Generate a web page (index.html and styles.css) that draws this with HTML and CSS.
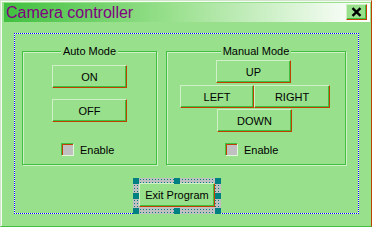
FILE: index.html
```html
<!DOCTYPE html>
<html lang="en">
<head>
  <meta charset="UTF-8" />
  <title>Camera controller</title>
  <link rel="stylesheet" href="styles.css">
</head>
<body>

  <div class="window">
    <div class="titlebar">
      <span class="title">Camera controller</span>
      <button class="close-btn" type="button">
        <svg width="11" height="10" viewBox="0 0 11 10">
          <path d="M1.5 1.2 L9.5 8.8 M9.5 1.2 L1.5 8.8" stroke="#000" stroke-width="2.4" fill="none"/>
        </svg>
      </button>
    </div>

    <div class="client">
      <div class="focus-rect">

        <div class="groups">
          <!-- Auto mode -->
          <fieldset class="group group-auto">
            <legend>Auto Mode</legend>
            <button class="btn btn-on" type="button">ON</button>
            <button class="btn btn-off" type="button">OFF</button>
            <label class="check-row"><span class="check"></span>Enable</label>
          </fieldset>

          <!-- Manual mode -->
          <fieldset class="group group-manual">
            <legend>Manual Mode</legend>
            <button class="btn btn-up" type="button">UP</button>
            <div class="btn-pair">
              <button class="btn btn-left" type="button">LEFT</button>
              <button class="btn btn-right" type="button">RIGHT</button>
            </div>
            <button class="btn btn-down" type="button">DOWN</button>
            <label class="check-row"><span class="check"></span>Enable</label>
          </fieldset>
        </div>

        <div class="selection">
          <button class="btn btn-exit" type="button">Exit Program</button>
          <span class="handle h-tl"></span>
          <span class="handle h-tm"></span>
          <span class="handle h-tr"></span>
          <span class="handle h-ml"></span>
          <span class="handle h-mr"></span>
          <span class="handle h-bl"></span>
          <span class="handle h-bm"></span>
          <span class="handle h-br"></span>
        </div>

      </div>
    </div>
  </div>

</body>
</html>
```

FILE: styles.css
```css
* {
  margin: 0;
  padding: 0;
  box-sizing: border-box;
  font-family: 'Liberation Sans', Arial, sans-serif;
}

body {
  background: #98e08c;
}

.window {
  width: 372px;
  height: 227px;
  display: flex;
  flex-direction: column;
  background: #98e08c;
  border: 1px solid;
  border-color: #d4e4cc #c04000 #40c040 #d4e4cc;
  box-shadow: inset 1px 1px 0 #f0fff0;
}

.titlebar {
  height: 19px;
  margin: 2px 1px 0 3px;
  display: flex;
  align-items: flex-start;
  justify-content: space-between;
  background: linear-gradient(90deg, #40c040, #98e08c 45%, #ffffff 98%);
}

.title {
  padding-left: 2px;
  font-size: 16px;
  line-height: 19px;
  color: #800080;
}

.close-btn {
  width: 21px;
  height: 16px;
  margin: 1px 3px 0 0;
  display: flex;
  align-items: center;
  justify-content: center;
  background: #98e08c;
  border: 1px solid;
  border-color: #d0f0c8 #c04000 #c04000 #d0f0c8;
  box-shadow: inset -1px -1px 0 #40c040;
}

.client {
  flex: 1;
  display: flex;
  padding: 11px 12px 12px 13px;
}

/* dotted focus frame, drawn pixel by pixel: blue / white */
.focus-rect {
  flex: 1;
  display: flex;
  flex-direction: column;
  padding: 11px 0 0 7px;
  border: 1px solid transparent;
  background:
    repeating-linear-gradient(90deg, #0000ff 0 1px, #ffffff 1px 2px) top left / 100% 1px no-repeat border-box,
    repeating-linear-gradient(90deg, #0000ff 0 1px, #ffffff 1px 2px) bottom left / 100% 1px no-repeat border-box,
    repeating-linear-gradient(180deg, #0000ff 0 1px, #ffffff 1px 2px) top left / 1px 100% no-repeat border-box,
    repeating-linear-gradient(180deg, #0000ff 0 1px, #ffffff 1px 2px) top right / 1px 100% no-repeat border-box,
    #98e08c;
}

.groups {
  display: flex;
  gap: 9px;
}

.group {
  height: 120px;
  min-width: 0;
  display: flex;
  flex-direction: column;
  align-items: flex-start;
  border: 1px solid #40c040;
  box-shadow: inset 1px 1px 0 #d0f0c8, 1px 1px 0 #d0f0c8;
}

.group legend {
  margin: 0 auto;
  padding: 0 2px;
  font-size: 11px;
  line-height: 13px;
  color: #000;
  background: #98e08c;
}

.group-auto {
  width: 135px;
  padding-top: 7px;
}

.group-manual {
  width: 180px;
  padding-top: 2px;
}

.btn {
  width: 75px;
  height: 23px;
  font-size: 11px;
  color: #000;
  background: #98e08c;
  border: 1px solid;
  border-color: #d0f0c8 #c04000 #c04000 #d0f0c8;
  box-shadow: inset -1px -1px 0 #40c040;
  outline: none;
}

.btn-on { margin-left: 29px; }
.btn-off { margin: 11px 0 0 29px; }

.btn-up { margin-left: 49px; }
.btn-pair {
  display: flex;
  margin: 2px 0 0 13px;
}
.btn-left { width: 74px; }
.btn-right { width: 76px; }
.btn-down { margin: 1px 0 0 50px; }

.check-row {
  display: flex;
  align-items: center;
  gap: 6px;
  height: 13px;
  font-size: 11px;
  color: #000;
}

.group-auto .check-row { margin: 21px 0 0 38px; }
.group-manual .check-row { margin: 11px 0 0 58px; }

.check {
  width: 13px;
  height: 13px;
  background: #c0c0c0;
  border: 1px solid;
  border-color: #40c040 #e0f8d8 #e0f8d8 #40c040;
  box-shadow: inset 1px 1px 0 #c04000;
}

.selection {
  position: relative;
  width: 88px;
  height: 36px;
  margin: 13px 0 -1px 111px;
  padding: 5px 6px;
  background: conic-gradient(from 270deg at 1px 1px, #008080 25%, #c0c0c0 0) 1px 1px / 3px 3px;
}

.btn-exit {
  width: 76px;
  height: 24px;
}

.handle {
  position: absolute;
  width: 6px;
  height: 6px;
  background: #008080;
}

.h-tl { left: 0; top: 0; }
.h-tm { left: 41px; top: 0; }
.h-tr { right: 0; top: 0; }
.h-ml { left: 0; top: 15px; }
.h-mr { right: 0; top: 15px; }
.h-bl { left: 0; bottom: 0; }
.h-bm { left: 41px; bottom: 0; }
.h-br { right: 0; bottom: 0; }
```
